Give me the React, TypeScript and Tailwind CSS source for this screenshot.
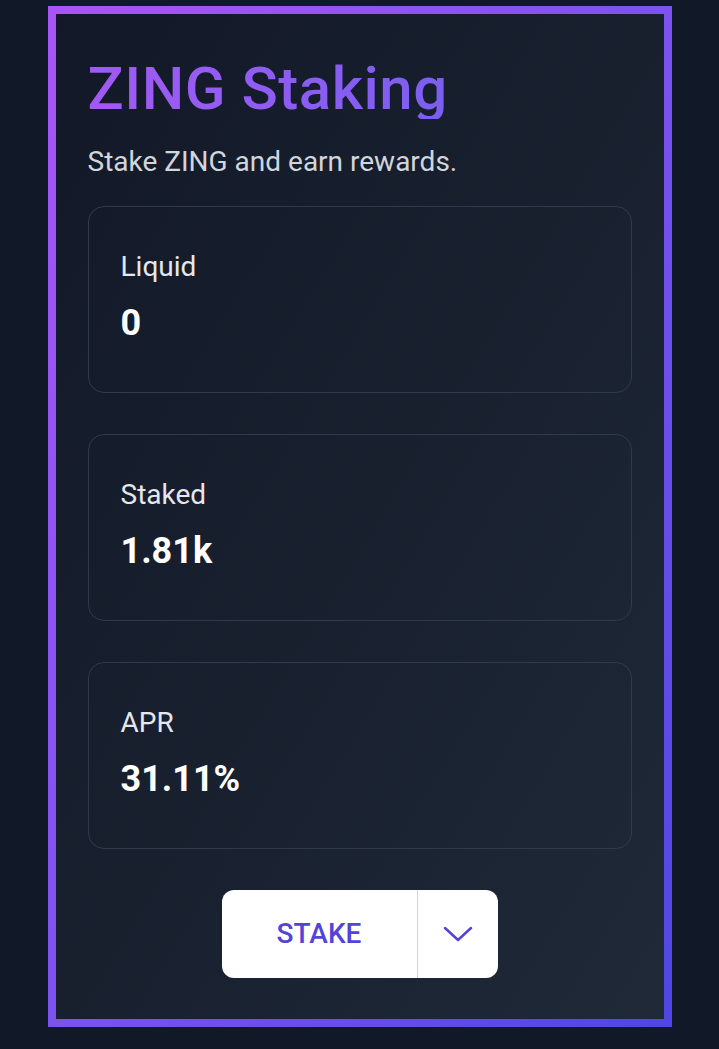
import React from "react";

function Card({ label, value }: { label: string; value: string }) {
  return (
    <div className="rounded-2xl border border-[#313a4a] px-8 pt-[42px] pb-[49px] flex flex-col gap-[18px]">
      <div className="text-[28px] leading-[36px] text-gray-200">{label}</div>
      <div className="text-[36px] leading-[40px] font-bold text-white">{value}</div>
    </div>
  );
}

export default function App() {
  return (
    <div
      className="min-h-[1049px] w-full bg-[#111827] pt-[6px]"
      style={{ fontFamily: "Roboto, 'Noto Sans', sans-serif" }}
    >
      <div className="mx-auto w-[624px] bg-gradient-to-br from-[#a855f7] via-[#7c52f0] to-[#4f46e5] p-2">
        <div className="bg-gradient-to-br from-[#121827] to-[#1f2937] px-8 pt-[45px] pb-[41px]">
          <h1 className="inline-block bg-gradient-to-r from-[#a259f4] to-[#7a5ff0] bg-clip-text text-transparent text-[60px] leading-[60px] font-medium tracking-[0.5px]">
            ZING Staking
          </h1>
          <p className="mt-[25px] text-[28px] leading-[36px] text-gray-300">
            Stake ZING and earn rewards.
          </p>
          <div className="mt-[26px] flex flex-col gap-[41px]">
            <Card label="Liquid" value="0" />
            <Card label="Staked" value="1.81k" />
            <Card label="APR" value="31.11%" />
          </div>
          <div className="mt-[41px] flex justify-center">
            <div className="flex h-[88px] w-[276px] rounded-xl bg-white overflow-hidden">
              <button className="flex w-[195px] items-center justify-center text-[28px] font-medium text-[#5443d8]">
                STAKE
              </button>
              <div className="w-px bg-gray-300" />
              <button className="flex flex-1 items-center justify-center">
                <svg width="30" height="16" viewBox="0 0 30 16" fill="none">
                  <path d="M2 2 L15 14 L28 2" stroke="#5443d8" strokeWidth="2.5" strokeLinecap="round" strokeLinejoin="round" />
                </svg>
              </button>
            </div>
          </div>
        </div>
      </div>
    </div>
  );
}
